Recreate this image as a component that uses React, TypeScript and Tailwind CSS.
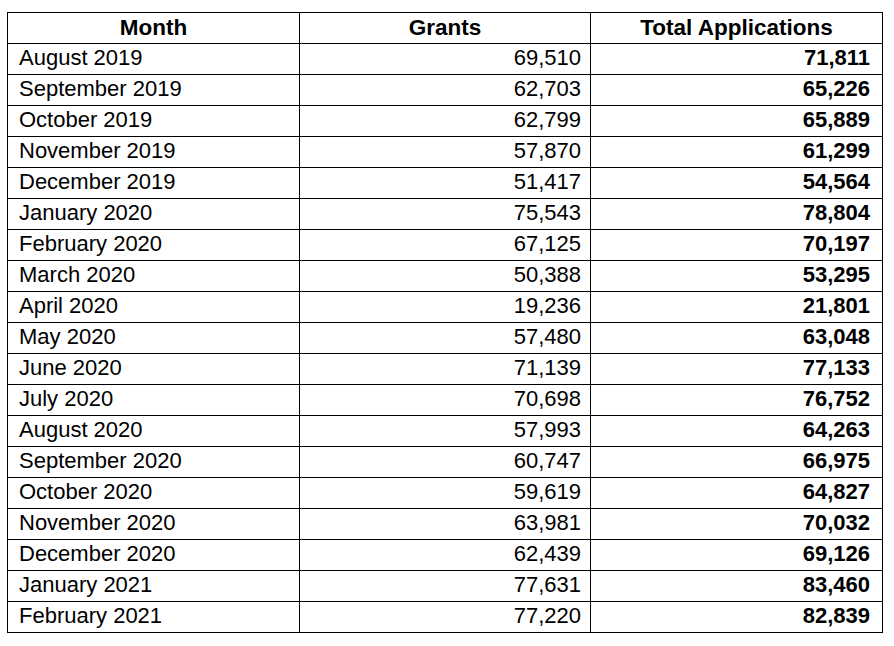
import React from "react";

const rows: [string, string, string][] = [
  ["August 2019", "69,510", "71,811"],
  ["September 2019", "62,703", "65,226"],
  ["October 2019", "62,799", "65,889"],
  ["November 2019", "57,870", "61,299"],
  ["December 2019", "51,417", "54,564"],
  ["January 2020", "75,543", "78,804"],
  ["February 2020", "67,125", "70,197"],
  ["March 2020", "50,388", "53,295"],
  ["April 2020", "19,236", "21,801"],
  ["May 2020", "57,480", "63,048"],
  ["June 2020", "71,139", "77,133"],
  ["July 2020", "70,698", "76,752"],
  ["August 2020", "57,993", "64,263"],
  ["September 2020", "60,747", "66,975"],
  ["October 2020", "59,619", "64,827"],
  ["November 2020", "63,981", "70,032"],
  ["December 2020", "62,439", "69,126"],
  ["January 2021", "77,631", "83,460"],
  ["February 2021", "77,220", "82,839"],
];

export default function App() {
  return (
    <div className="w-[894px] h-[646px] bg-white pt-[12px] pl-[7px] text-black" style={{ fontFamily: '"Liberation Sans", Arial, sans-serif' }}>
      <div className="w-[876px] border-l border-t border-black text-[22px] leading-[25px]">
        <div className="grid grid-cols-[292px_291px_292px] font-bold text-[22.5px]">
          <div className="h-[31px] border-r border-b border-black pt-[2px] text-center">Month</div>
          <div className="h-[31px] border-r border-b border-black pt-[2px] text-center">Grants</div>
          <div className="h-[31px] border-r border-b border-black pt-[2px] text-center">Total Applications</div>
        </div>
        {rows.map((r) => (
          <div key={r[0]} className="grid grid-cols-[292px_291px_292px]">
            <div className="h-[31px] border-r border-b border-black pt-[1px] pl-[11px]">{r[0]}</div>
            <div className="h-[31px] border-r border-b border-black pt-[1px] pr-[9px] text-right">{r[1]}</div>
            <div className="h-[31px] border-r border-b border-black pt-[1px] pr-[12px] text-right font-bold">{r[2]}</div>
          </div>
        ))}
      </div>
    </div>
  );
}
